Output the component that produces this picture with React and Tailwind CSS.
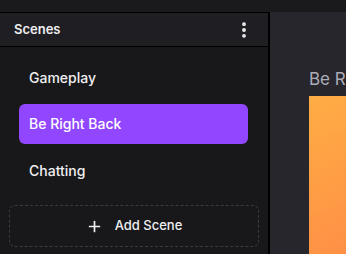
import { EllipsisVertical, Plus } from "lucide-react";

const scenes = ["Gameplay", "Be Right Back", "Chatting"];

export default function App() {
  const active = "Be Right Back";

  return (
    <div className="w-[346px] h-[254px] flex flex-col bg-[#18181b] overflow-hidden font-['Inter','Liberation_Sans',sans-serif]">
      {/* top strip */}
      <div className="h-[12px] shrink-0 bg-[#1a1a1d]" />

      <div className="flex flex-1 min-h-0">
        {/* SIDEBAR */}
        <aside className="w-[270px] shrink-0 flex flex-col border-t border-r-2 border-black bg-[#18181b]">
          <div className="h-[34px] shrink-0 flex items-center justify-between pl-[14px] pr-[14px] bg-[#1f1f23] border-b border-black">
            <span className="text-[13px] font-semibold text-[#efeff1]">Scenes</span>
            <EllipsisVertical size={20} strokeWidth={2.6} className="text-[#efeff1]" />
          </div>

          <div className="flex flex-col gap-[6.5px] pt-[10px] pl-[19px] pr-[20px]">
            {scenes.map((s) => (
              <div
                key={s}
                className={`h-[40px] flex items-center px-[10px] rounded-md text-[14px] font-medium ${
                  s === active ? "bg-[#9147ff] text-white" : "text-[#efeff1]"
                }`}
              >
                {s}
              </div>
            ))}
          </div>

          <button className="mt-[15px] ml-[9px] w-[250px] h-[42px] flex items-center justify-center gap-[12px] rounded-md border border-dashed border-[#3a3a40] text-[13px] font-medium text-[#efeff1]">
            <Plus size={17} strokeWidth={2.4} />
            Add Scene
          </button>
        </aside>

        {/* PREVIEW */}
        <main className="flex-1 bg-[#26262c] pl-[39px] pt-[57px] flex flex-col">
          <span className="text-[17px] leading-[20px] text-[#adadb8] whitespace-nowrap">Be Right Back</span>
          <div className="mt-[7px] w-[300px] flex-1 bg-gradient-to-br from-[#ffad45] to-[#ff7745]" />
        </main>
      </div>
    </div>
  );
}
